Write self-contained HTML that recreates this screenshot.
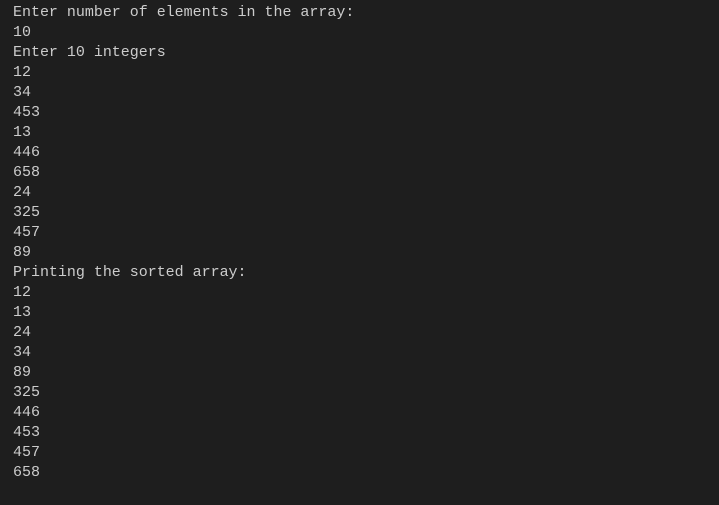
<!DOCTYPE html>
<html><head><style>
html,body{margin:0;padding:0;background:#1e1e1e;width:719px;height:505px;overflow:hidden}
pre{margin:0;position:absolute;left:13px;top:3px;font-family:"Liberation Mono",monospace;font-size:15px;line-height:20px;color:#cccccc;letter-spacing:-0.02px}
</style></head><body>
<pre>Enter number of elements in the array:
10
Enter 10 integers
12
34
453
13
446
658
24
325
457
89
Printing the sorted array:
12
13
24
34
89
325
446
453
457
658</pre>
</body></html>
